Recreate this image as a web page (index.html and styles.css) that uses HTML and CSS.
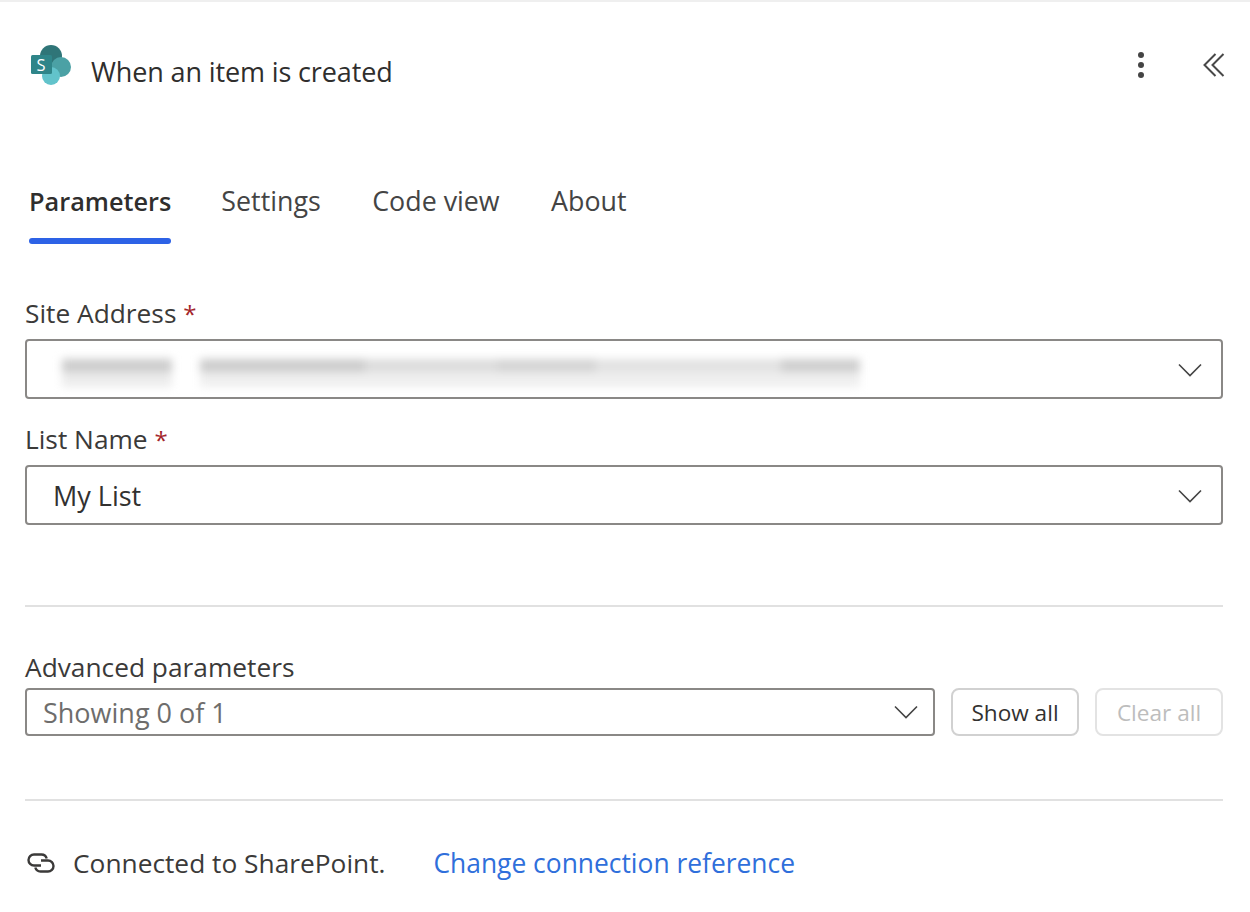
FILE: index.html
```html
<!DOCTYPE html>
<html lang="en">
<head>
<meta charset="utf-8">
<title>When an item is created</title>
<link rel="stylesheet" href="styles.css">
</head>
<body>
<main class="panel">
  <header class="header">
    <svg class="logo" viewBox="0 0 41 41" aria-hidden="true">
      <circle cx="21" cy="11" r="11" fill="#2f7578"/>
      <circle cx="31" cy="22" r="10" fill="#4ba1a5"/>
      <circle cx="21" cy="31" r="9" fill="#62c3cb"/>
      <rect x="1" y="10" width="21" height="19" rx="1.5" fill="#2f8589"/>
      <text x="11" y="25.500" class="logo-s">S</text>
    </svg>
    <h1 class="title">When an item is created</h1>
    <div class="header-actions">
      <svg class="dots" viewBox="0 0 8 26" aria-hidden="true">
        <circle cx="4" cy="3" r="3"/><circle cx="4" cy="13" r="3"/><circle cx="4" cy="23" r="3"/>
      </svg>
      <svg class="collapse" viewBox="0 0 22 24" aria-hidden="true">
        <path d="M12.500 1 1.500 12 12.500 23M20.500 1 9.500 12 20.500 23"/>
      </svg>
    </div>
  </header>

  <nav class="tabs">
    <span class="tab tab-active">Parameters</span>
    <span class="tab">Settings</span>
    <span class="tab">Code view</span>
    <span class="tab">About</span>
  </nav>

  <section class="fields">
    <label class="label">Site Address <span class="req">*</span></label>
    <div class="select select-large">
      <div class="blurred" aria-hidden="true"><i class="b1"></i><i class="b2"></i></div>
      <svg class="chev" viewBox="0 0 24 14" aria-hidden="true"><path d="M1 1.500 12 12.500 23 1.500"/></svg>
    </div>
    <label class="label label-next">List Name <span class="req">*</span></label>
    <div class="select select-large">
      <span class="value">My List</span>
      <svg class="chev" viewBox="0 0 24 14" aria-hidden="true"><path d="M1 1.500 12 12.500 23 1.500"/></svg>
    </div>
  </section>

  <hr class="rule rule-first">

  <section class="advanced">
    <div class="label">Advanced parameters</div>
    <div class="adv-row">
      <div class="select select-small">
        <span class="value value-muted">Showing 0 of 1</span>
        <svg class="chev" viewBox="0 0 24 14" aria-hidden="true"><path d="M1 1.500 12 12.500 23 1.500"/></svg>
      </div>
      <button class="btn" type="button">Show all</button>
      <button class="btn btn-disabled" type="button" disabled>Clear all</button>
    </div>
  </section>

  <hr class="rule rule-second">

  <footer class="conn">
    <svg class="link-icon" viewBox="0 0 28 20" aria-hidden="true">
      <path d="M14 12.500H7A5.500 5.500 0 0 1 7 1.500H14.500A5.500 5.500 0 0 1 19.700 5.500"/>
      <path d="M14 7.500H21A5.500 5.500 0 0 1 21 18.500H13.500A5.500 5.500 0 0 1 8.300 14.500"/>
    </svg>
    <span class="conn-text">Connected to SharePoint.</span>
    <a class="conn-link" href="#">Change connection reference</a>
  </footer>
</main>
</body>
</html>
```

FILE: styles.css
```css
* { box-sizing: border-box; }
html, body { margin: 0; padding: 0; background: #fff; }
body { font-family: "Open Sans", "Noto Sans", "Liberation Sans", sans-serif; color: #323130; }
.panel { width: 1250px; height: 912px; padding: 0 27px 0 25px; border-top: 2px solid #efefef; overflow: hidden; }

.header { display: flex; align-items: center; height: 70px; margin-top: 35px; padding-left: 5px; }
.logo { width: 41px; height: 41px; flex: none; margin-bottom: 14px; }
.logo-s { font: 400 16.500px "Open Sans", sans-serif; fill: #fff; text-anchor: middle; }
.title { margin: 0 0 0 20px; padding-bottom: 2px; font-size: 27px; font-weight: 400; color: #2f2e2d; letter-spacing: -0.13px; flex: 1; }
.header-actions { display: flex; align-items: center; gap: 58px; margin-top: -14px; margin-right: -2px; }
.dots { width: 8px; height: 26px; fill: #444; }
.collapse { width: 22px; height: 24px; fill: none; stroke: #484848; stroke-width: 2; }

.tabs { display: flex; gap: 51.500px; margin-top: 75px; padding-left: 4px; height: 61px; }
.tab { position: relative; font-size: 26.800px; color: #444; line-height: 36px; padding-top: 1px; }
.tab-active { font-size: 25.300px; font-weight: 600; color: #2f2e2d; margin-right: -1.500px; }
.tab-active::after { content: ""; position: absolute; left: 0; right: 0; top: 56px; height: 6px; background: #2d62e6; border-radius: 3px; }

.fields { padding-top: 53px; }
.label { display: block; font-size: 26.300px; line-height: 34px; color: #3b3a39; height: 36px; }
.req { color: #a4262c; font-size: 24px; }
.label-next { margin-top: 23px; }
.select { display: flex; align-items: center; justify-content: space-between; border: 2px solid #8a8886; border-radius: 4px; background: #fff; }
.select-large { height: 60px; margin-top: 7px; padding: 0 19px 0 26px; }
.select-large .chev { margin-top: 2px; }
.select-large .value { margin-top: 1px; }
.select-small { flex: 1; height: 48px; padding: 0 15px 0 16px; }
.value { font-size: 27px; color: #323130; }
.value-muted { color: #6e6d6c; }
.chev { width: 24px; height: 14px; fill: none; stroke: #444; stroke-width: 1.600; flex: none; }

.blurred { display: flex; gap: 28px; align-items: center; filter: blur(4px); margin: 7px 0 0 9px; }
.blurred i { display: block; height: 28px; }
.b1 { width: 110px; background: linear-gradient(#cccccc 0 48%, #ececec 48% 100%); }
.b2 { width: 660px; background: linear-gradient(transparent 0 48%, #efefef 48% 100%), linear-gradient(90deg, #cccccc 0 25%, #dcdcdc 25% 45%, #d4d4d4 45% 60%, #e2e2e2 60% 88%, #cecece 88% 100%); }

.rule { border: 0; height: 2px; background: #e1e1e1; margin: 0; }
.rule-first { margin-top: 80px; }
.advanced { margin-top: 43px; }
.adv-row { display: flex; gap: 16px; margin-top: 2px; }
.btn { width: 128px; height: 48px; border: 2px solid #d1d1d1; border-radius: 8px; background: #fff; font: 400 22.600px "Open Sans", sans-serif; color: #323130; padding: 1px 0 0; }
.btn-disabled { border-color: #e3e3e3; color: #bdbdbd; }
.rule-second { margin-top: 63px; }

.conn { display: flex; align-items: center; margin-top: 44px; padding-left: 2px; height: 36px; font-size: 26.300px; }
.link-icon { width: 28px; height: 20px; fill: none; stroke: #3b3a39; stroke-width: 2.400; flex: none; margin-right: 18px; }
.conn-text { color: #3b3a39; margin-right: 48px; }
.conn-link { color: #2f6fdb; text-decoration: none; font-size: 26.400px; }
```
